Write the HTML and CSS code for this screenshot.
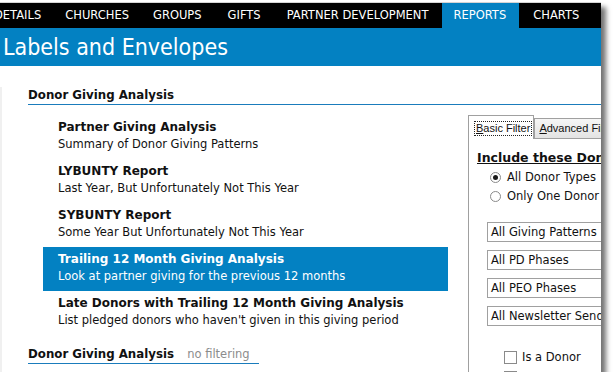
FILE: index.html
```html
<!DOCTYPE html><html><head><title>Labels and Envelopes</title><meta http-equiv=Content-Type content="text/html; charset=utf-8"><link rel="stylesheet" href="styles.css"></head>
<body>
<div class="window">
    <div class="topnav">
        <span class="navitem first">DETAILS</span>
        <span class="navitem">CHURCHES</span>
        <span class="navitem">GROUPS</span>
        <span class="navitem wide">GIFTS</span>
        <span class="navitem wide">PARTNER DEVELOPMENT</span>
        <span class="navitem current">REPORTS</span>
        <span class="navitem wide">CHARTS</span>
    </div>
    <div class="titlebar">Labels and Envelopes</div>

    <div class="content">
        <div class="section">Donor Giving Analysis</div>
        <div class="columns">
            <div class="reports">
                <div class="report">
                    <div class="rtitle">Partner Giving Analysis</div>
                    <div class="rdesc">Summary of Donor Giving Patterns</div>
                </div>
                <div class="report">
                    <div class="rtitle">LYBUNTY Report</div>
                    <div class="rdesc">Last Year, But Unfortunately Not This Year</div>
                </div>
                <div class="report">
                    <div class="rtitle">SYBUNTY Report</div>
                    <div class="rdesc">Some Year But Unfortunately Not This Year</div>
                </div>
                <div class="report selected">
                    <div class="rtitle">Trailing 12 Month Giving Analysis</div>
                    <div class="rdesc">Look at partner giving for the previous 12 months</div>
                </div>
                <div class="report">
                    <div class="rtitle">Late Donors with Trailing 12 Month Giving Analysis</div>
                    <div class="rdesc">List pledged donors who haven't given in this giving period</div>
                </div>
                <div class="subsection">Donor Giving Analysis <span class="muted">no filtering</span></div>
            </div>

            <div class="filters">
                <div class="tabs">
                    <div class="tab active"><span class="focus"><u>B</u>asic Filter</span></div>
                    <div class="tab"><u>A</u>dvanced Filter</div>
                </div>
                <div class="panel">
                    <div class="include">Include these Donors</div>
                    <div class="option"><span class="radio checked"></span>All Donor Types</div>
                    <div class="option"><span class="radio"></span>Only One Donor Type</div>
                    <div class="dropdown first">All Giving Patterns</div>
                    <div class="dropdown">All PD Phases</div>
                    <div class="dropdown">All PEO Phases</div>
                    <div class="dropdown">All Newsletter Send Types</div>
                    <div class="check first"><span class="box"></span>Is a Donor</div>
                    <div class="check"><span class="box"></span>Is a Partner</div>
                </div>
            </div>
        </div>
    </div>
</div>
</body></html>
```

FILE: styles.css
```css
body {margin:0;background-color:white;font-family:'DejaVu Sans',Verdana,sans-serif;color:#111}
div.window {margin-top:2px;width:601px;height:370px;box-sizing:border-box;border-top:1px solid #d4d4d4;background:white;overflow:hidden;box-shadow:5px 5px 5px rgba(0,0,0,0.55)}

div.topnav {display:flex;height:25px;background:#000;white-space:nowrap;overflow:hidden}
span.navitem {padding:0 12px;font-size:11.5px;line-height:25px;color:white}
span.navitem.first {margin-left:-18px}
span.navitem.wide {padding-left:14px}
span.navitem.current {background:#0381c2;padding:0 13px 0 11px;margin-left:2px}
div.titlebar {height:38px;background:#0381c2;color:white;font-family:'DejaVu Sans Condensed','DejaVu Sans',sans-serif;font-size:23px;line-height:38px;padding-left:3px}

div.content {border-left:2px solid #f0f0f0;padding-left:26px;height:100%}
div.section {margin-top:21px;font-size:11.8px;font-weight:bold;line-height:17px;border-bottom:1px solid #1a7cbc}
div.columns {display:flex;gap:20px}
div.reports {width:420px;flex-shrink:0;padding-top:10px}

div.report {margin-left:15px;padding:4px 0 6px 15px;white-space:nowrap;overflow:hidden}
div.report.selected {background:#0381c2;color:white}
div.rtitle {font-size:12px;font-weight:bold;line-height:17px}
div.rdesc {font-size:11.5px;line-height:17px}

div.subsection {display:inline-block;margin-top:11px;padding-right:9px;font-size:11.8px;font-weight:bold;line-height:17px;border-bottom:1px solid #1a7cbc;white-space:nowrap}
span.muted {margin-left:9px;font-size:11.5px;font-weight:normal;color:#8c8c8c}

div.filters {padding-top:10px;width:200px;flex-shrink:0}
div.tabs {display:flex;align-items:flex-end;font-family:'Liberation Sans',Arial,sans-serif;font-size:11px;white-space:nowrap}
div.tab {height:20px;line-height:19px;padding:0 4px;border:1px solid #a0a0a0;border-bottom:none;background:linear-gradient(#f6f6f6,#e3e3e3);box-sizing:border-box}
div.tab.active {height:24px;padding:3px 1px 0 5px;background:white;margin-bottom:-1px;position:relative}
span.focus {display:inline-block;line-height:13px;padding:0 1px;border:1px dotted #222}
div.panel {border-left:1px solid #a0a0a0;border-top:1px solid #a0a0a0;padding:11px 0 0 8px;height:260px;white-space:nowrap}

div.include {font-size:12.5px;font-weight:bold;line-height:16px;text-decoration:underline;margin-bottom:2px}
div.option {display:flex;align-items:center;padding-left:13px;font-size:11.5px;line-height:19px}
span.radio {width:9px;height:9px;border:1px solid #8a8a8a;border-radius:50%;margin-right:6px;position:relative;background:white}
span.radio.checked::after {content:"";position:absolute;left:2px;top:2px;width:5px;height:5px;border-radius:50%;background:#1a1a1a}
div.dropdown {margin:8px 0 0 10px;width:180px;height:20px;box-sizing:border-box;border:1px solid #a0a0a0;padding-left:3px;font-size:11.5px;line-height:18px}
div.dropdown.first {margin-top:16px}
div.check {display:flex;align-items:center;margin-left:27px;font-size:11.5px;line-height:20px}
div.check.first {margin-top:21px}
span.box {width:11px;height:11px;border:1px solid #8a8a8a;margin-right:5px;background:white}
```
